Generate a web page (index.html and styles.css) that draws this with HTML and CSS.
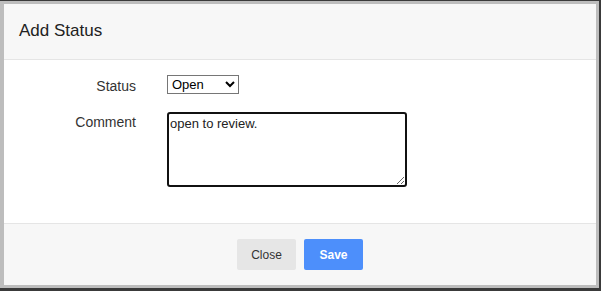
FILE: index.html
```html
<!DOCTYPE html>
<html lang="en">
<head>
    <meta charset="UTF-8">
    <meta name="viewport" content="width=device-width, initial-scale=1.0">
    <title>Add Status</title>
    <link rel="stylesheet" href="styles.css">
</head>
<body>
    <div class="backdrop">
        <div class="frame">
            <div class="modal">
                <div class="modal-header">
                    <h2>Add Status</h2>
                </div>
                <div class="modal-body">
                    <form class="status-form">
                        <label for="status" class="status-label">Status</label>
                        <div class="field">
                            <select id="status">
                                <option>Open</option>
                                <option>Closed</option>
                                <option>Pending</option>
                            </select>
                        </div>
                        <label for="comment" class="comment-label">Comment</label>
                        <div class="field">
                            <textarea id="comment">open to review.</textarea>
                        </div>
                    </form>
                </div>
                <div class="modal-footer">
                    <button class="btn btn-close">Close</button>
                    <button class="btn btn-save">Save</button>
                </div>
            </div>
        </div>
    </div>
</body>
</html>
```

FILE: styles.css
```css
* {
    margin: 0;
    padding: 0;
    box-sizing: border-box;
}

body {
    font-family: 'Liberation Sans', Arial, sans-serif;
    color: #333;
}

.backdrop {
    height: 100vh;
    background: #3a3a3a;
    padding: 1px 2px 3px 0;
}

.frame {
    height: 100%;
    background: #bdbdbd;
    padding: 3px 3px 3px 4px;
}

.modal {
    height: 100%;
    background: #fff;
    display: flex;
    flex-direction: column;
}

.modal-header {
    height: 56px;
    background: #f7f7f7;
    border-bottom: 1px solid #e5e5e5;
    padding: 0 15px;
    display: flex;
    align-items: center;
}

.modal-header h2 {
    font-size: 17px;
    font-weight: normal;
    color: #222;
    margin-top: -1px;
}

.modal-body {
    height: 164px;
    border-bottom: 1px solid #e5e5e5;
    padding-top: 15px;
}

.status-form {
    display: grid;
    grid-template-columns: 132px 240px;
    column-gap: 31px;
    row-gap: 16px;
    align-items: start;
}

.status-form label {
    text-align: right;
    font-size: 14px;
    color: #333;
    line-height: 19px;
}

.status-label {
    padding-top: 2px;
}

.comment-label {
    padding-top: 1px;
}

.field {
    display: flex;
}

select {
    width: 72px;
    height: 19px;
    font-family: 'Liberation Sans', Arial, sans-serif;
    font-size: 13px;
    color: #000;
    border: 1px solid #767676;
    background: #fff;
}

textarea {
    width: 240px;
    height: 75px;
    border: 2px solid #111;
    border-radius: 3px;
    padding: 2px 1px;
    font-family: 'Liberation Sans', Arial, sans-serif;
    font-size: 13px;
    color: #222;
    outline: none;
}

.modal-footer {
    flex: 1;
    background: #f7f7f7;
    display: flex;
    justify-content: center;
    gap: 8px;
    padding-top: 15px;
}

.btn {
    width: 59px;
    height: 31px;
    border: none;
    border-radius: 2px;
    font-family: 'Liberation Sans', Arial, sans-serif;
    font-size: 12px;
    cursor: pointer;
}

.btn-close {
    background: #e6e6e6;
    color: #333;
}

.btn-save {
    background: #4d8ffb;
    color: #fff;
    font-weight: bold;
}
```
